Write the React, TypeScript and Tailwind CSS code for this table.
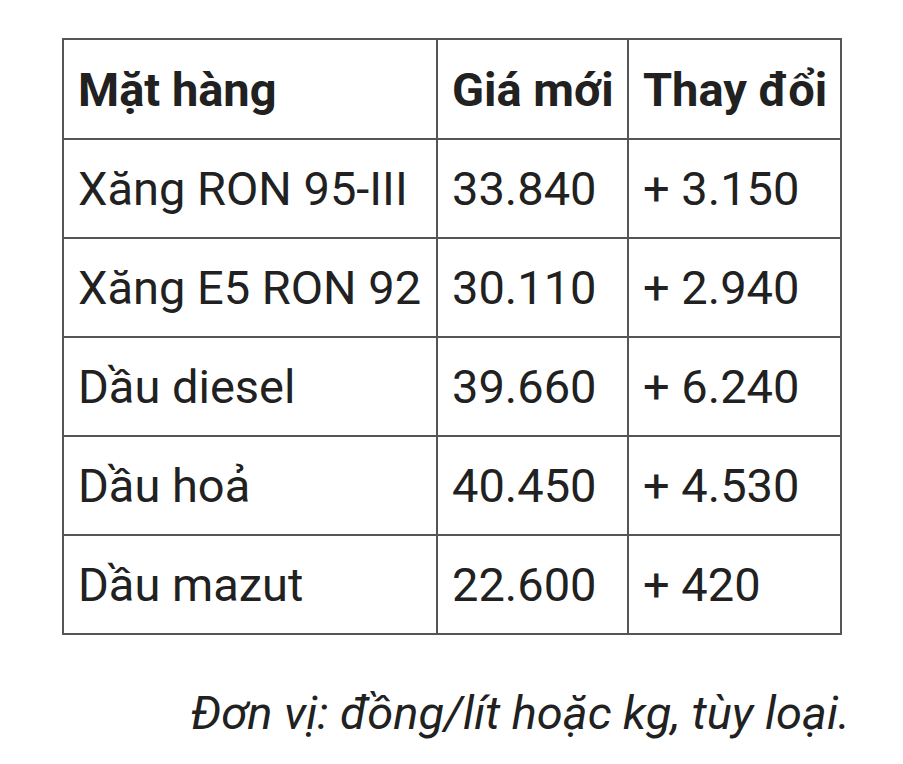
import React from 'react';

const rows = [
  ['Xăng RON 95-III', '33.840', '+ 3.150'],
  ['Xăng E5 RON 92', '30.110', '+ 2.940'],
  ['Dầu diesel', '39.660', '+ 6.240'],
  ['Dầu hoả', '40.450', '+ 4.530'],
  ['Dầu mazut', '22.600', '+ 420'],
];

const cell = 'border-2 border-[#555] pl-[14px] pr-[2px] text-left whitespace-nowrap';

export default function App() {
  return (
    <div className="w-[903px] h-[764px] bg-white text-[#212121] font-['Roboto',sans-serif] pt-[38px] pl-[62px]">
      <table className="border-collapse table-fixed w-[778px] text-[47px] leading-none">
        <colgroup>
          <col className="w-[374px]" />
          <col className="w-[191px]" />
          <col className="w-[213px]" />
        </colgroup>
        <thead>
          <tr className="h-[100px]">
            <th className={`${cell} font-bold`}>Mặt hàng</th>
            <th className={`${cell} font-bold`}>Giá mới</th>
            <th className={`${cell} font-bold`}>Thay đổi</th>
          </tr>
        </thead>
        <tbody>
          {rows.map((r) => (
            <tr key={r[0]} className="h-[99px]">
              <td className={cell}>{r[0]}</td>
              <td className={cell}>{r[1]}</td>
              <td className={cell}>{r[2]}</td>
            </tr>
          ))}
        </tbody>
      </table>
      <p className="w-[788px] text-right italic text-[47px] leading-none mt-[54px]">
        Đơn vị: đồng/lít hoặc kg, tùy loại.
      </p>
    </div>
  );
}
